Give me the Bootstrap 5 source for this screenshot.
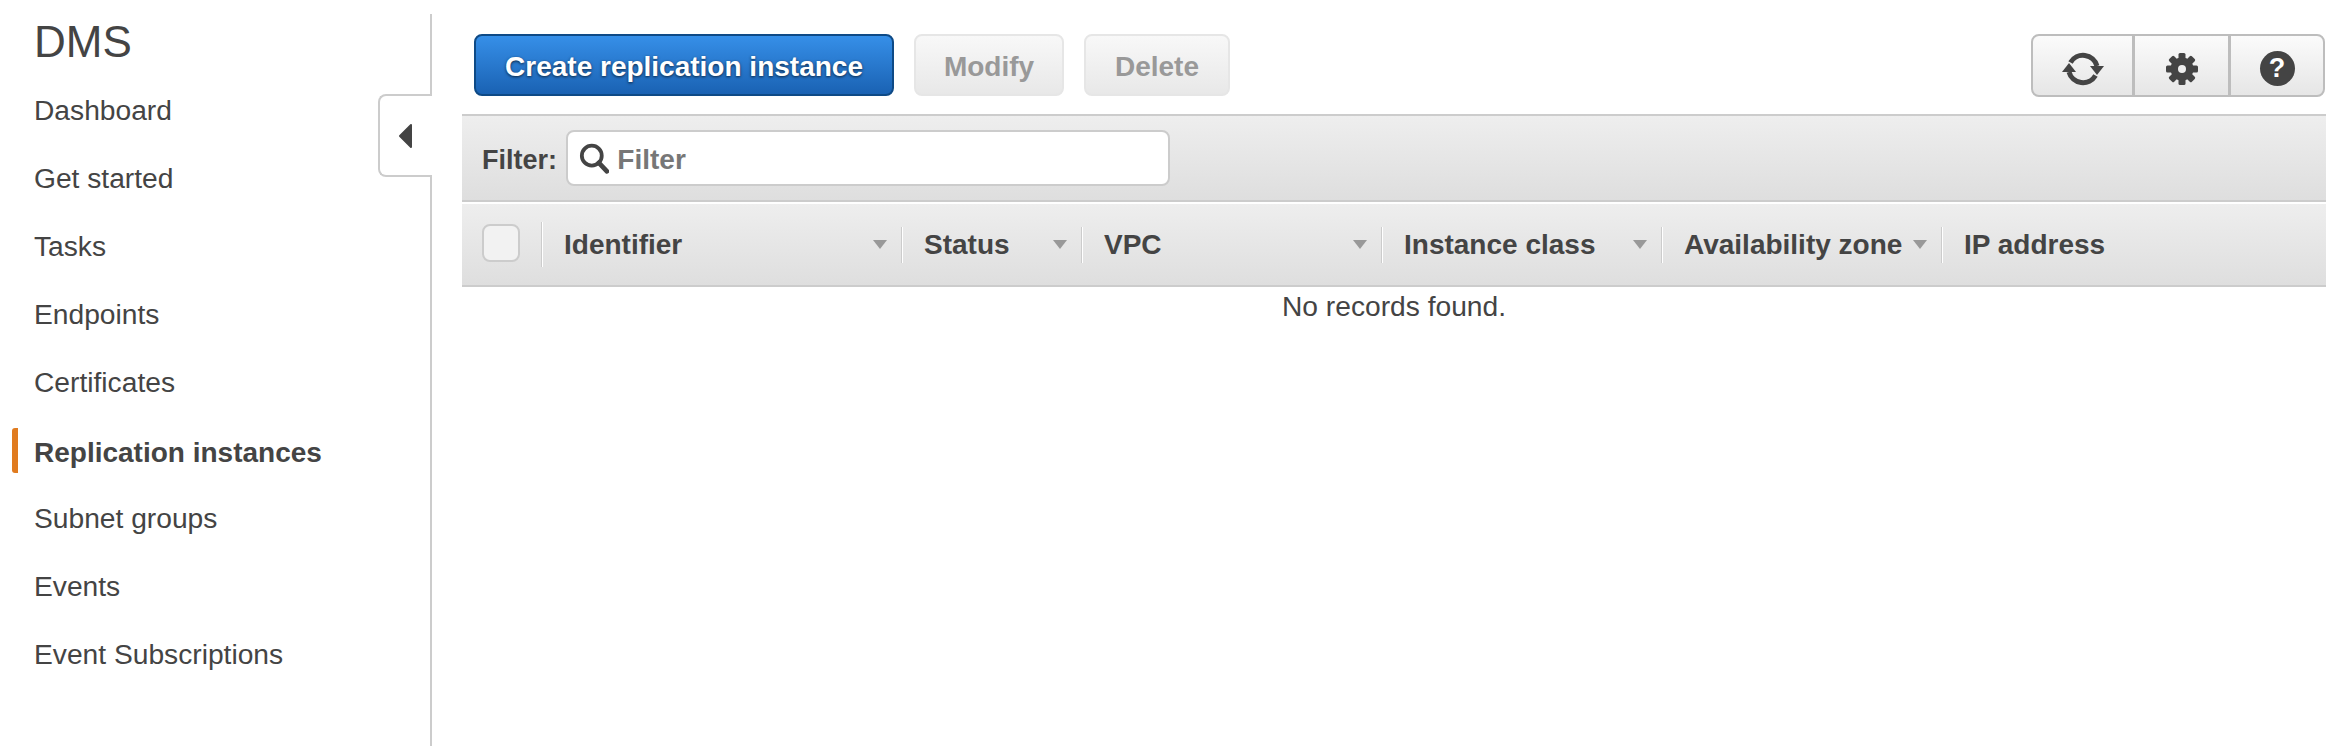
<!DOCTYPE html>
<html lang="en">
<head>
  <meta charset="UTF-8" />
  <meta name="viewport" content="width=device-width, initial-scale=1.0" />
  <title>DMS - Replication instances</title>
  <link rel="stylesheet" href="https://cdn.jsdelivr.net/npm/bootstrap@5.3.2/dist/css/bootstrap.min.css">
  <style>
    body { font-family: "Liberation Sans", Arial, sans-serif; font-size: 28px; color: #444; background: #fff; overflow: hidden; }
    .page-wrap { height: 746px; }
    .side-panel { width: 432px; flex: none; margin-top: 14px; border-right: 2px solid #ccc; position: relative; }
    .side-title { font-size: 44px; font-weight: 400; line-height: 56px; margin: 0 0 6px; padding-left: 34px; color: #444; }
    .side-link { display: flex; align-items: center; height: 68px; padding: 0 0 0 12px; font-size: 28.2px; color: #444; }
    .side-link:hover { color: #444; }
    .side-link::before { content: ""; width: 6px; height: 45px; margin-right: 16px; border-radius: 3px 0 0 3px; }
    .side-link.active { font-size: 28px; font-weight: 700; color: #444; padding-top: 6px; }
    .side-link.active::before { background: #e07b1f; margin-bottom: 6px; }
    .collapse-tab { position: absolute; top: 80px; right: -2px; width: 54px; height: 83px; padding: 0 0 0 18px; background: #fff; border: 2px solid #ccc; border-right: 0; border-radius: 8px 0 0 8px; display: flex; align-items: center; }
    .main-panel { margin-left: 30px; width: 1864px; flex: none; }
    .tool-row { height: 114px; padding: 34px 1px 18px 12px; gap: 20px; }
    .btn.tool-btn { height: 62px; font-size: 28px; font-weight: 700; line-height: 1; padding: 4px 28px 0; border-radius: 8px; }
    .btn.btn-create { width: 420px; color: #fff; background: linear-gradient(#368fe8, #1a62b3); border: 2px solid #0e4a86; text-shadow: 0 1px 3px rgba(0,0,0,.7); }
    .btn.btn-off, .btn.btn-off:disabled { width: 150px; color: #999; background: linear-gradient(#f8f8f8, #e8e8e8); border: 2px solid #e6e6e6; opacity: 1; padding: 4px 0 0; }
    .btn.btn-off.btn-del { width: 146px; }
    .icon-group .btn { width: 97px; height: 63px; padding: 6px 0 0; background: linear-gradient(#fbfbfb, #e6e6e6); border: 2px solid #bdbdbd; display: flex; align-items: center; justify-content: center; }
    .icon-group .btn:first-child { width: 103px; border-radius: 8px 0 0 8px; }
    .icon-group .btn:last-child { width: 96px; border-radius: 0 8px 8px 0; }
    .help-dot { width: 35px; height: 35px; background: #444; color: #fff; font-size: 27px; font-weight: 700; line-height: 35px; text-align: center; }
    .filter-bar { height: 88px; padding-left: 20px; background: linear-gradient(#eeeeee, #dedede); border-top: 2px solid #ccc; border-bottom: 2px solid #ccc; }
    .filter-label { width: 84px; flex: none; margin: 0; padding-top: 4px; font-weight: 700; font-size: 27px; }
    .filter-box { width: 604px; height: 56px; background: #fff; border: 2px solid #ccc; border-radius: 8px; padding-left: 11px; }
    .filter-box .form-control { border: 0; background: transparent; box-shadow: none; padding: 3px 0 0 8px; font-size: 28px; font-weight: 700; color: #444; }
    .filter-box .form-control::placeholder { color: #777; opacity: 1; }
    .rep-table { --bs-table-bg: transparent; table-layout: fixed; width: 1864px; margin: 2px 0 0; color: #444; }
    .rep-table col.w-check { width: 79px; }
    .rep-table col.w-ident { width: 360px; }
    .rep-table col.w-status { width: 180px; }
    .rep-table col.w-vpc { width: 300px; }
    .rep-table col.w-class { width: 280px; }
    .rep-table col.w-zone { width: 280px; }
    .rep-table col.w-ip { width: 385px; }
    .rep-table > thead > tr { background: linear-gradient(#eeeeee, #dedede); }
    .rep-table > thead > tr > th { height: 82px; padding: 0; border-bottom: 2px solid #ccc; font-size: 28px; font-weight: 700; vertical-align: middle; }
    .rep-table > tbody > tr > td { height: 38px; padding: 0; border: 0; line-height: 38px; font-size: 28.2px; text-align: center; }
    .cell-wrap { padding-right: 14px; }
    .col-sep { width: 1px; height: 36px; margin-right: 22px; background: #ccc; box-shadow: 1px 0 0 #fff; flex: none; }
    .col-sep.tall { height: 45px; }
    .sort-tri { width: 0; height: 0; margin-left: auto; border-left: 7px solid transparent; border-right: 7px solid transparent; border-top: 9px solid #999; }
    .rep-table .form-check-input { width: 38px; height: 38px; margin: 0 0 0 20px; border: 2px solid #ccc; border-radius: 8px; background-color: #f2f2f2; }
  </style>
</head>
<body>
  <div class="page-wrap d-flex">
    <aside class="side-panel">
      <h1 class="side-title">DMS</h1>
      <nav class="nav flex-column">
        <a class="nav-link side-link" href="#">Dashboard</a>
        <a class="nav-link side-link" href="#">Get started</a>
        <a class="nav-link side-link" href="#">Tasks</a>
        <a class="nav-link side-link" href="#">Endpoints</a>
        <a class="nav-link side-link" href="#">Certificates</a>
        <a class="nav-link side-link active" href="#">Replication instances</a>
        <a class="nav-link side-link" href="#">Subnet groups</a>
        <a class="nav-link side-link" href="#">Events</a>
        <a class="nav-link side-link" href="#">Event Subscriptions</a>
      </nav>
      <button class="collapse-tab" type="button" aria-label="Collapse">
        <svg width="15" height="26" viewBox="0 0 15 26"><polygon points="13,2 13,24 2,13" fill="#444" stroke="#444" stroke-width="2" stroke-linejoin="round"/></svg>
      </button>
    </aside>

    <main class="main-panel">
      <div class="tool-row d-flex align-items-start">
        <button class="btn tool-btn btn-create" type="button">Create replication instance</button>
        <button class="btn tool-btn btn-off" type="button" disabled>Modify</button>
        <button class="btn tool-btn btn-off btn-del" type="button" disabled>Delete</button>
        <div class="btn-group icon-group ms-auto">
          <button class="btn" type="button" aria-label="Refresh">
            <svg width="42" height="36" viewBox="0 0 42 36">
              <path d="M8.5 11.5A14.5 14.5 0 0 1 35 15M33.5 24.5A14.5 14.5 0 0 1 7 21" fill="none" stroke="#444" stroke-width="5"/>
              <polygon points="28,15 42,15 35,24" fill="#444"/>
              <polygon points="0,21 14,21 7,12" fill="#444"/>
            </svg>
          </button>
          <button class="btn" type="button" aria-label="Settings">
            <svg width="32" height="32" viewBox="0 0 32 32">
              <g fill="#444">
                <rect x="12.5" y="0" width="7" height="32" rx="1.5"/>
                <rect x="12.5" y="0" width="7" height="32" rx="1.5" transform="rotate(45 16 16)"/>
                <rect x="12.5" y="0" width="7" height="32" rx="1.5" transform="rotate(90 16 16)"/>
                <rect x="12.5" y="0" width="7" height="32" rx="1.5" transform="rotate(135 16 16)"/>
                <circle cx="16" cy="16" r="11.5"/>
              </g>
              <circle cx="16" cy="16" r="4" fill="#eee"/>
            </svg>
          </button>
          <button class="btn" type="button" aria-label="Help">
            <span class="help-dot rounded-circle d-block">?</span>
          </button>
        </div>
      </div>

      <div class="filter-bar d-flex align-items-center">
        <label class="filter-label" for="filterInput">Filter:</label>
        <div class="filter-box d-flex align-items-center">
          <svg class="flex-none" width="32" height="33" viewBox="0 0 32 33">
            <circle cx="13.5" cy="13.5" r="10.5" fill="none" stroke="#444" stroke-width="4"/>
            <path d="M21 21l8.5 9" fill="none" stroke="#444" stroke-width="5" stroke-linecap="round"/>
          </svg>
          <input id="filterInput" class="form-control" type="text" placeholder="Filter">
        </div>
      </div>

      <table class="table rep-table">
        <colgroup>
          <col class="w-check"><col class="w-ident"><col class="w-status"><col class="w-vpc"><col class="w-class"><col class="w-zone"><col class="w-ip">
        </colgroup>
        <thead>
          <tr>
            <th><input class="form-check-input" type="checkbox" aria-label="Select all"></th>
            <th><div class="cell-wrap d-flex align-items-center"><span class="col-sep tall"></span>Identifier<span class="sort-tri"></span></div></th>
            <th><div class="cell-wrap d-flex align-items-center"><span class="col-sep"></span>Status<span class="sort-tri"></span></div></th>
            <th><div class="cell-wrap d-flex align-items-center"><span class="col-sep"></span>VPC<span class="sort-tri"></span></div></th>
            <th><div class="cell-wrap d-flex align-items-center"><span class="col-sep"></span>Instance class<span class="sort-tri"></span></div></th>
            <th><div class="cell-wrap d-flex align-items-center"><span class="col-sep"></span>Availability zone<span class="sort-tri"></span></div></th>
            <th><div class="cell-wrap d-flex align-items-center"><span class="col-sep"></span>IP address</div></th>
          </tr>
        </thead>
        <tbody>
          <tr><td colspan="7">No records found.</td></tr>
        </tbody>
      </table>
    </main>
  </div>
  <script src="https://cdn.jsdelivr.net/npm/bootstrap@5.3.2/dist/js/bootstrap.bundle.min.js"></script>
</body>
</html>
